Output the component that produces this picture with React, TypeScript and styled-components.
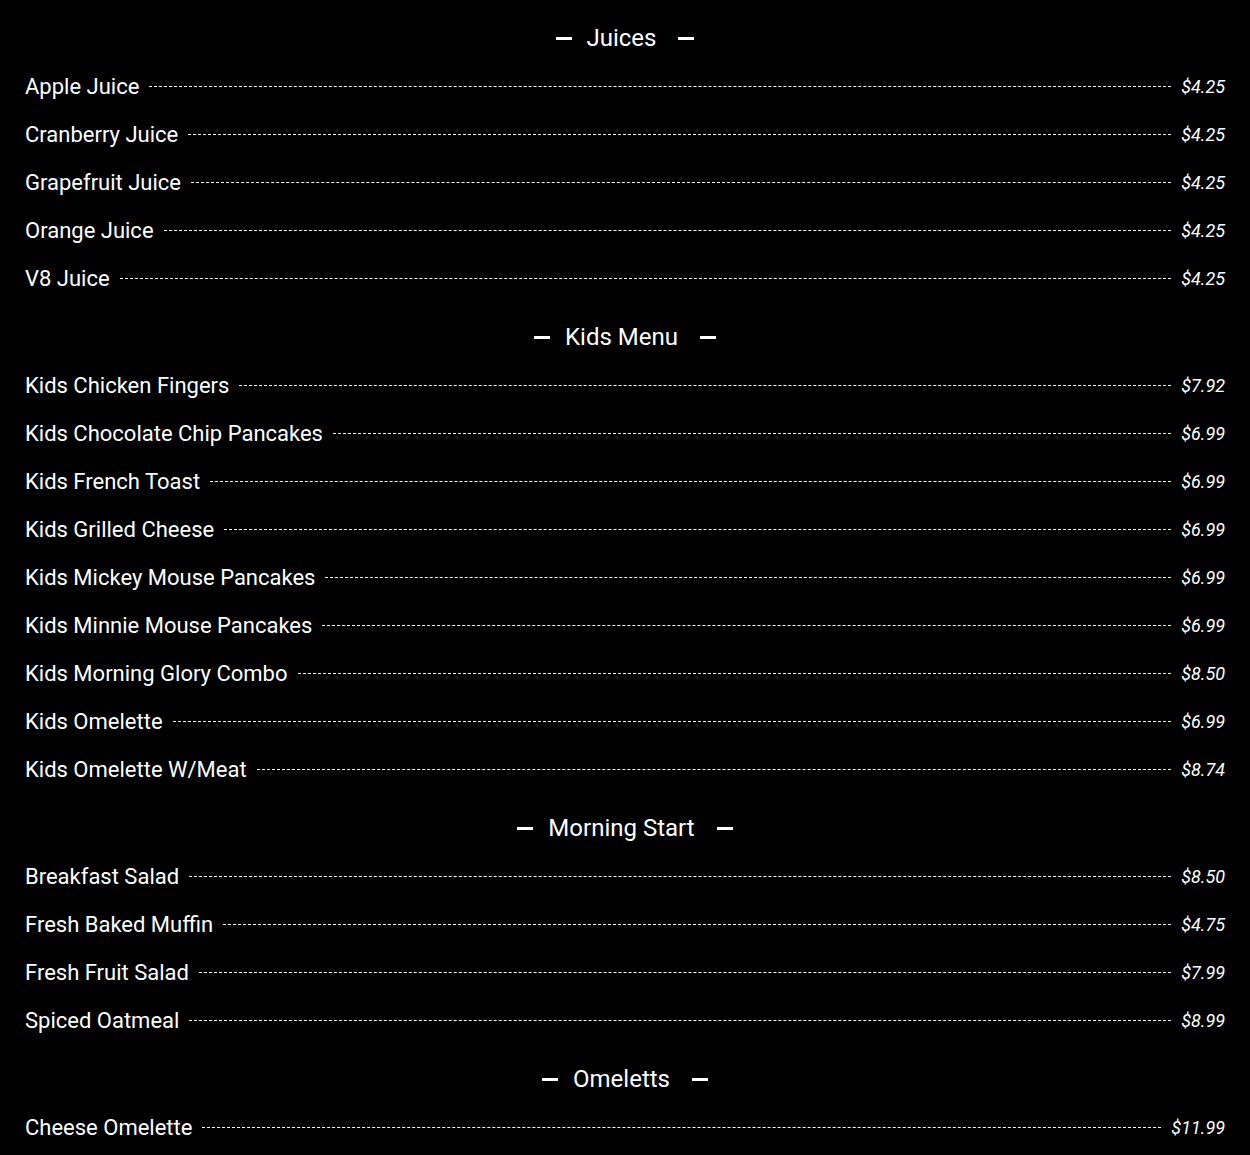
import React from "react";
import styled, { createGlobalStyle } from "styled-components";

const GlobalStyle = createGlobalStyle`
  html, body {
    margin: 0;
    padding: 0;
    background: #000;
  }
  body {
    font-family: Roboto, "Liberation Sans", Arial, sans-serif;
    color: #fff;
  }
`;

type Item = { name: string; price: string };
type Section = { title: string; items: Item[] };

const menu: Section[] = [
  {
    title: "Juices",
    items: [
      { name: "Apple Juice", price: "$4.25" },
      { name: "Cranberry Juice", price: "$4.25" },
      { name: "Grapefruit Juice", price: "$4.25" },
      { name: "Orange Juice", price: "$4.25" },
      { name: "V8 Juice", price: "$4.25" },
    ],
  },
  {
    title: "Kids Menu",
    items: [
      { name: "Kids Chicken Fingers", price: "$7.92" },
      { name: "Kids Chocolate Chip Pancakes", price: "$6.99" },
      { name: "Kids French Toast", price: "$6.99" },
      { name: "Kids Grilled Cheese", price: "$6.99" },
      { name: "Kids Mickey Mouse Pancakes", price: "$6.99" },
      { name: "Kids Minnie Mouse Pancakes", price: "$6.99" },
      { name: "Kids Morning Glory Combo", price: "$8.50" },
      { name: "Kids Omelette", price: "$6.99" },
      { name: "Kids Omelette W/Meat", price: "$8.74" },
    ],
  },
  {
    title: "Morning Start",
    items: [
      { name: "Breakfast Salad", price: "$8.50" },
      { name: "Fresh Baked Muffin", price: "$4.75" },
      { name: "Fresh Fruit Salad", price: "$7.99" },
      { name: "Spiced Oatmeal", price: "$8.99" },
    ],
  },
  {
    title: "Omeletts",
    items: [{ name: "Cheese Omelette", price: "$11.99" }],
  },
];

const Page = styled.main`
  padding: 13px 25px 0;
  display: flex;
  flex-direction: column;
  gap: 10px;
`;

const SectionBlock = styled.section`
  display: flex;
  flex-direction: column;
`;

const Header = styled.h2`
  margin: 0;
  height: 49px;
  display: flex;
  align-items: center;
  justify-content: center;
  font-size: 24px;
  font-weight: 400;
  color: #fff;
`;

const Dash = styled.span<{ $side: "left" | "right" }>`
  display: block;
  width: 16px;
  height: 3px;
  background: #fff;
  margin-top: 2px;
  margin-right: ${(p) => (p.$side === "left" ? "15px" : "0")};
  margin-left: ${(p) => (p.$side === "right" ? "22px" : "0")};
`;

const Row = styled.div`
  height: 48px;
  display: flex;
  align-items: center;
  gap: 10px;
`;

const Name = styled.span`
  font-size: 22px;
  white-space: nowrap;
  color: #fff;
`;

const Leader = styled.span`
  flex: 1;
  height: 0;
  border-top: 1px dashed #fff;
`;

const Price = styled.span`
  font-size: 18px;
  font-style: italic;
  white-space: nowrap;
  color: #fff;
`;

export default function App() {
  return (
    <>
      <GlobalStyle />
      <Page>
        {menu.map((s) => (
          <SectionBlock key={s.title}>
            <Header>
              <Dash $side="left" />
              {s.title}
              <Dash $side="right" />
            </Header>
            {s.items.map((it) => (
              <Row key={it.name}>
                <Name>{it.name}</Name>
                <Leader />
                <Price>{it.price}</Price>
              </Row>
            ))}
          </SectionBlock>
        ))}
      </Page>
    </>
  );
}
